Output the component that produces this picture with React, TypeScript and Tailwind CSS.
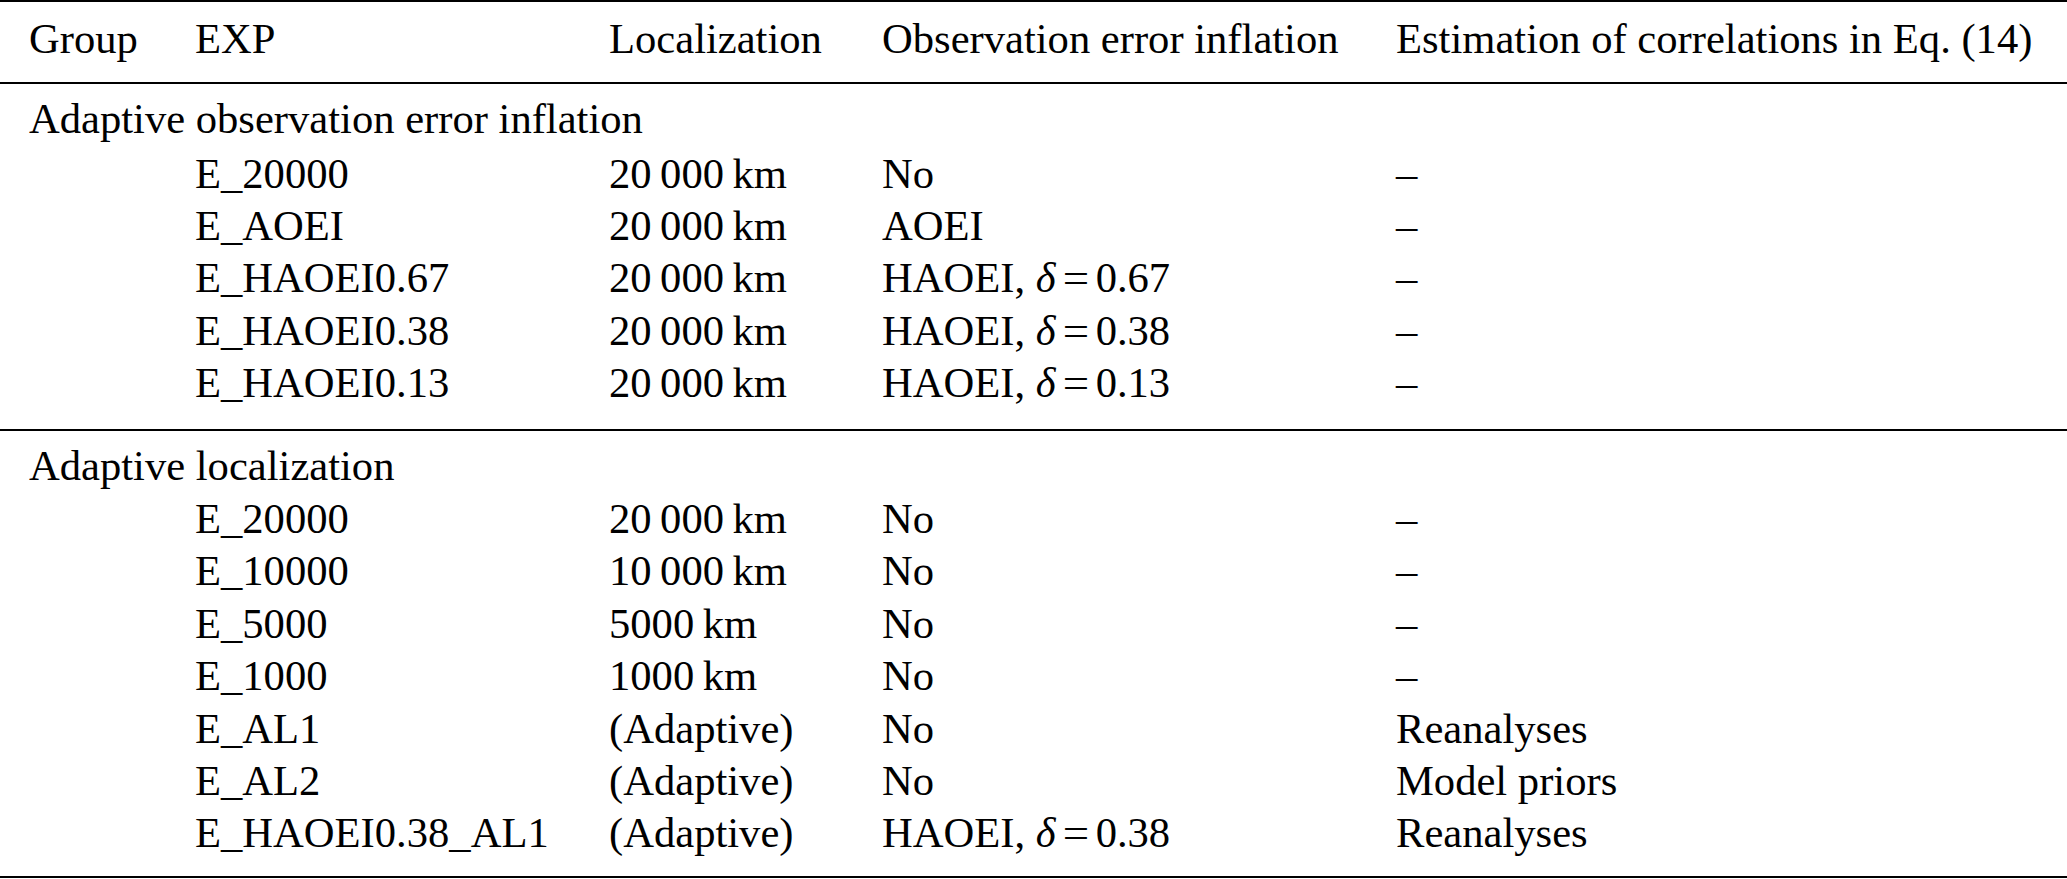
const sections = [
  {
    title: 'Adaptive observation error inflation',
    gap: 'mb-[2.5px]',
    rows: [
      { exp: 'E_20000', loc: '20\u2009000\u2009km', obs: 'No', est: '–' },
      { exp: 'E_AOEI', loc: '20\u2009000\u2009km', obs: 'AOEI', est: '–' },
      { exp: 'E_HAOEI0.67', loc: '20\u2009000\u2009km', obs: { delta: '0.67' }, est: '–' },
      { exp: 'E_HAOEI0.38', loc: '20\u2009000\u2009km', obs: { delta: '0.38' }, est: '–' },
      { exp: 'E_HAOEI0.13', loc: '20\u2009000\u2009km', obs: { delta: '0.13' }, est: '–' },
    ],
  },
  {
    title: 'Adaptive localization',
    gap: 'mb-[0.5px]',
    rows: [
      { exp: 'E_20000', loc: '20\u2009000\u2009km', obs: 'No', est: '–' },
      { exp: 'E_10000', loc: '10\u2009000\u2009km', obs: 'No', est: '–' },
      { exp: 'E_5000', loc: '5000\u2009km', obs: 'No', est: '–' },
      { exp: 'E_1000', loc: '1000\u2009km', obs: 'No', est: '–' },
      { exp: 'E_AL1', loc: '(Adaptive)', obs: 'No', est: 'Reanalyses' },
      { exp: 'E_AL2', loc: '(Adaptive)', obs: 'No', est: 'Model priors' },
      { exp: 'E_HAOEI0.38_AL1', loc: '(Adaptive)', obs: { delta: '0.38' }, est: 'Reanalyses' },
    ],
  },
]

type Obs = string | { delta: string }

const cols = 'grid grid-cols-[166px_414px_273px_514px_1fr] px-[29px] leading-[52.4px]'

function ObsCell({ obs }: { obs: Obs }) {
  if (typeof obs === 'string') return <div>{obs}</div>
  return (
    <div className="whitespace-nowrap">
      HAOEI, <span className="italic">δ</span>
      <span className="mx-[8px] inline-block scale-x-110">=</span>
      {obs.delta}
    </div>
  )
}

export default function App() {
  return (
    <div className="w-[2067px] h-[879px] bg-white text-black text-[42.6px] overflow-hidden font-['Liberation_Serif','Times_New_Roman',serif]">
      {/* top rule */}
      <div className="h-[2px] bg-black" />

      {/* Header */}
      <div className={`${cols} pt-[10.6px] mb-[17px]`}>
        <div>Group</div>
        <div>EXP</div>
        <div>Localization</div>
        <div>Observation error inflation</div>
        <div>Estimation of correlations in Eq. (14)</div>
      </div>
      <div className="h-[2px] bg-black" />

      {sections.map((section, i) => (
        <div key={section.title}>
          <div className={`px-[29px] leading-[52.4px] ${i === 0 ? 'mt-[8.6px]' : 'mt-[9.6px]'} ${section.gap}`}>
            {section.title}
          </div>
          {section.rows.map((row) => (
            <div key={row.exp} className={cols}>
              <div />
              <div>{row.exp}</div>
              <div>{row.loc}</div>
              <ObsCell obs={row.obs} />
              <div>{row.est}</div>
            </div>
          ))}
          {i === 0 ? (
            <div className="mt-[19px] h-[2px] bg-black" />
          ) : (
            <div className="mt-[16px] h-[2px] bg-black" />
          )}
        </div>
      ))}
    </div>
  )
}
